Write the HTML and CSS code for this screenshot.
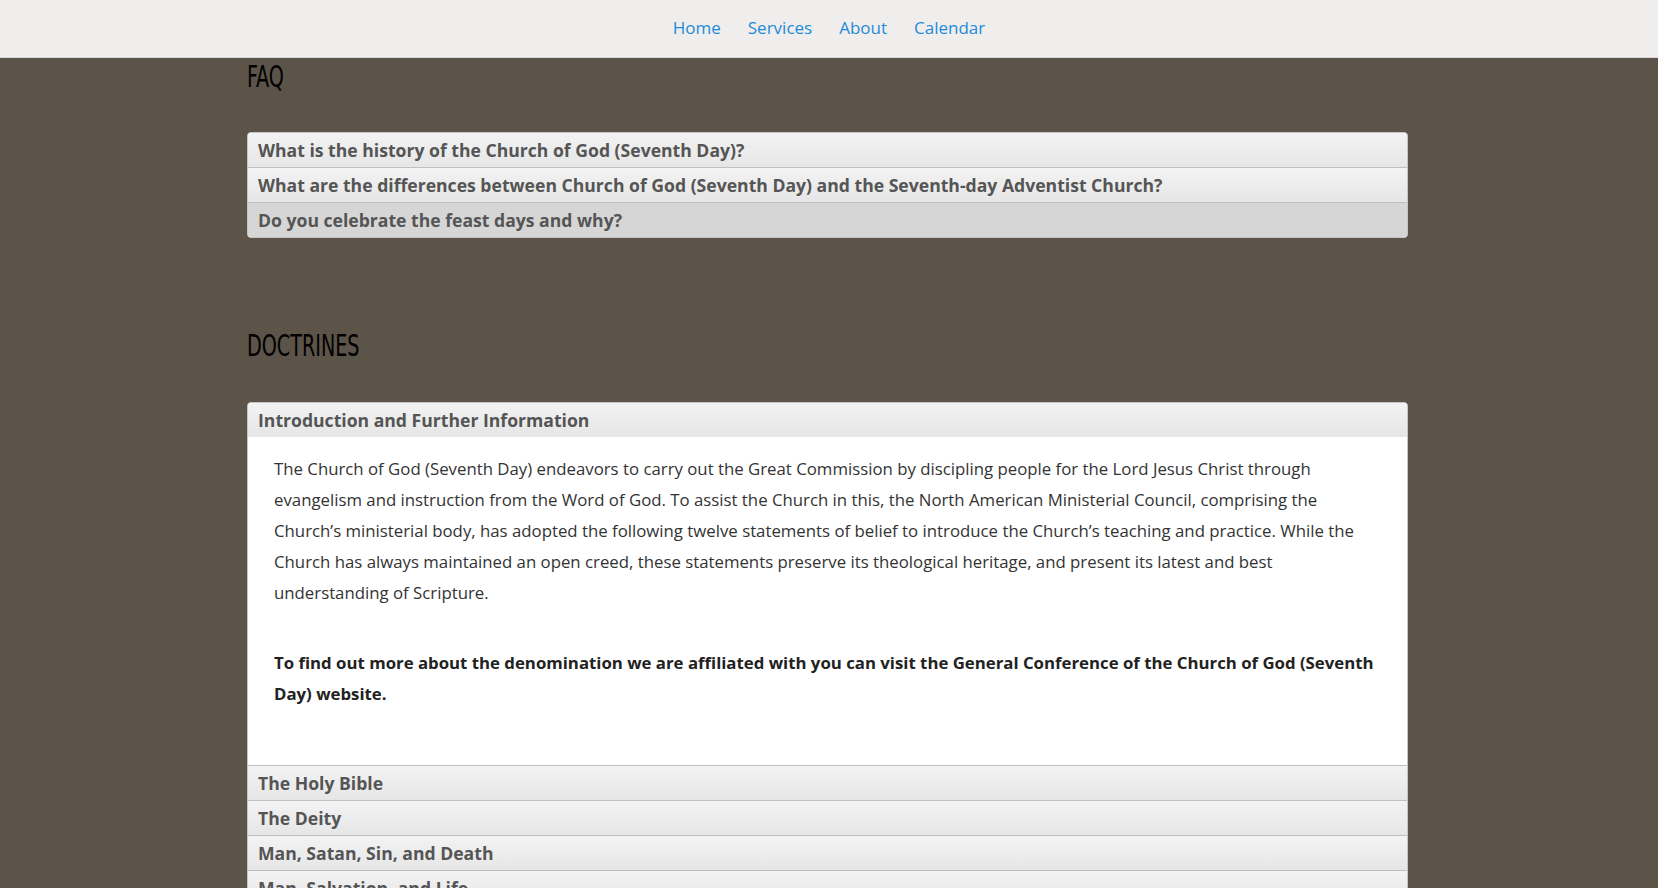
FILE: index.html
```html
<!DOCTYPE html>
<html>
<head>
<meta charset="utf-8">
<link rel="stylesheet" href="styles.css">
</head>
<body>
<nav class="topnav">
  <a href="#">Home</a>
  <a href="#">Services</a>
  <a href="#">About</a>
  <a href="#">Calendar</a>
</nav>
<main class="wrap">
  <section class="section">
    <h2 class="title"><span>FAQ</span></h2>
    <div class="accordion">
      <div class="acc-head">What is the history of the Church of God (Seventh Day)?</div>
      <div class="acc-head">What are the differences between Church of God (Seventh Day) and the Seventh-day Adventist Church?</div>
      <div class="acc-head hover">Do you celebrate the feast days and why?</div>
    </div>
  </section>
  <section class="section second">
    <h2 class="title"><span>DOCTRINES</span></h2>
    <div class="accordion">
      <div class="acc-head">Introduction and Further Information</div>
      <div class="acc-body">
        <p>The Church of God (Seventh Day) endeavors to carry out the Great Commission by discipling people for the Lord Jesus Christ through evangelism and instruction from the Word of God. To assist the Church in this, the North American Ministerial Council, comprising the Church’s ministerial body, has adopted the following twelve statements of belief to introduce the Church’s teaching and practice. While the Church has always maintained an open creed, these statements preserve its theological heritage, and present its latest and best understanding of Scripture.</p>
        <p class="strong">To find out more about the denomination we are affiliated with you can visit the General Conference of the Church of God (Seventh Day) website.</p>
      </div>
      <div class="acc-head">The Holy Bible</div>
      <div class="acc-head">The Deity</div>
      <div class="acc-head">Man, Satan, Sin, and Death</div>
      <div class="acc-head">Man, Salvation, and Life</div>
      <div class="acc-head">The Church</div>
      <div class="acc-head">Christian Living</div>
    </div>
  </section>
</main>
</body>
</html>
```
FILE: styles.css
```css
html, body {
  margin: 0;
  padding: 0;
}
body {
  background: #5c5449;
  font-family: "Open Sans", "Noto Sans", sans-serif;
  overflow: hidden;
}
.topnav {
  height: 57px;
  background: #efeeec;
  border-bottom: 1px solid #d9d7d3;
  display: flex;
  justify-content: center;
  align-items: center;
  gap: 27px;
  padding-left: 0;
  box-sizing: content-box;
}
.topnav a {
  color: #1f8bd8;
  text-decoration: none;
  font-size: 17px;
  line-height: 24px;
  margin-top: -2px;
}
.wrap {
  width: 1161px;
  margin-left: calc(50% - 582px);
}
.title {
  margin: 0;
  height: 74px;
  font-family: "Liberation Sans Narrow", "DejaVu Sans Condensed", sans-serif;
  font-weight: normal;
  font-size: 30px;
  line-height: 36px;
  color: #000;
  padding-top: 1px;
  box-sizing: border-box;
}
.title span {
  display: inline-block;
  transform: scaleX(0.71);
  transform-origin: left center;
}
.second {
  margin-top: 90px;
}
.second .title {
  padding-top: 0;
}
.accordion {
  border: 1px solid #c5c5c5;
  border-radius: 4px;
  overflow: hidden;
  background: #fff;
}
.acc-head {
  background: linear-gradient(#f3f3f3, #e6e6e6);
  color: #555;
  font-weight: 700;
  font-size: 17.6px;
  line-height: 22px;
  padding: 6px 10px;
  border-top: 1px solid #c0c0c0;
}
.acc-head:first-child {
  border-top: none;
}
.acc-head.hover {
  background: #d6d6d6;
}
.acc-body {
  padding: 16px 26px 17px;
  background: #fff;
  color: #333;
  font-size: 16.8px;
  line-height: 31px;
}
.acc-body p {
  margin: 0 0 39px;
}
.acc-body p.strong {
  font-weight: 700;
  color: #222;
}
```
